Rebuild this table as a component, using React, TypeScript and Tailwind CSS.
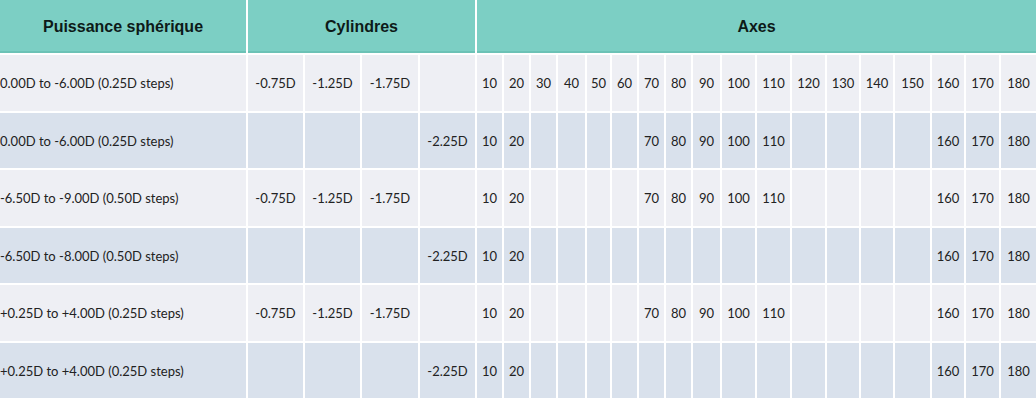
import React from 'react';

const AXES = [10, 20, 30, 40, 50, 60, 70, 80, 90, 100, 110, 120, 130, 140, 150, 160, 170, 180];

interface Row {
    sphere: string;
    cyl: string[];
    axes: number[];
}

const MID = [10, 20, 70, 80, 90, 100, 110, 160, 170, 180];
const LOW = [10, 20, 160, 170, 180];
const THREE = ['-0.75D', '-1.25D', '-1.75D', ''];
const ONE = ['', '', '', '-2.25D'];

const rows: Row[] = [
    { sphere: '0.00D to -6.00D (0.25D steps)', cyl: THREE, axes: AXES },
    { sphere: '0.00D to -6.00D (0.25D steps)', cyl: ONE, axes: MID },
    { sphere: '-6.50D to -9.00D (0.50D steps)', cyl: THREE, axes: MID },
    { sphere: '-6.50D to -8.00D (0.50D steps)', cyl: ONE, axes: LOW },
    { sphere: '+0.25D to +4.00D (0.25D steps)', cyl: THREE, axes: MID },
    { sphere: '+0.25D to +4.00D (0.25D steps)', cyl: ONE, axes: LOW },
];

const App: React.FC = () => {
    return (
        <div className="w-[1036px] h-[400px] overflow-hidden bg-white text-[#222] font-['Lato',sans-serif]">
            <div className="grid grid-cols-[248px_57px_57px_58px_57px_27px_27px_27px_29px_25px_27px_27px_27px_29px_35px_35px_35px_34px_34px_37px_34px_35px_35px] grid-rows-[55px_58px_57px_58px_57px_58px_57px]">
                {/* header */}
                <div className="flex items-center justify-center bg-[#7ccfc4] border-r-2 border-b-2 border-white shadow-[inset_0_-2px_0_#6cc2b6] font-['Liberation_Sans',sans-serif] font-bold text-[16px] text-[#0d1a18]">
                    Puissance sphérique
                </div>
                <div className="col-span-4 flex items-center justify-center bg-[#7ccfc4] border-r-2 border-b-2 border-white shadow-[inset_0_-2px_0_#6cc2b6] font-['Liberation_Sans',sans-serif] font-bold text-[16px] text-[#0d1a18]">
                    Cylindres
                </div>
                <div className="col-span-18 flex items-center justify-center bg-[#7ccfc4] border-b-2 border-white shadow-[inset_0_-2px_0_#6cc2b6] font-['Liberation_Sans',sans-serif] font-bold text-[16px] text-[#0d1a18]">
                    Axes
                </div>

                {rows.map((row, i) => {
                    const bg = i % 2 === 0 ? 'bg-[#eeeff4]' : 'bg-[#d9e1ec]';
                    return (
                        <React.Fragment key={i}>
                            <div className={`${bg} flex items-center pt-[2px] text-[13px] whitespace-nowrap border-r-2 border-b-2 border-white`}>
                                {row.sphere}
                            </div>
                            {row.cyl.map((c, j) => (
                                <div key={'c' + j} className={`${bg} flex items-center justify-center pt-[2px] text-[13px] border-r-2 border-b-2 border-white`}>
                                    {c}
                                </div>
                            ))}
                            {AXES.map((a, k) => (
                                <div key={'a' + k} className={`${bg} flex items-center justify-center pt-[2px] text-[13px] border-b-2 border-white ${k < AXES.length - 1 ? 'border-r-2' : ''}`}>
                                    {row.axes.includes(a) ? a : ''}
                                </div>
                            ))}
                        </React.Fragment>
                    );
                })}
            </div>
        </div>
    );
};

export default App;
